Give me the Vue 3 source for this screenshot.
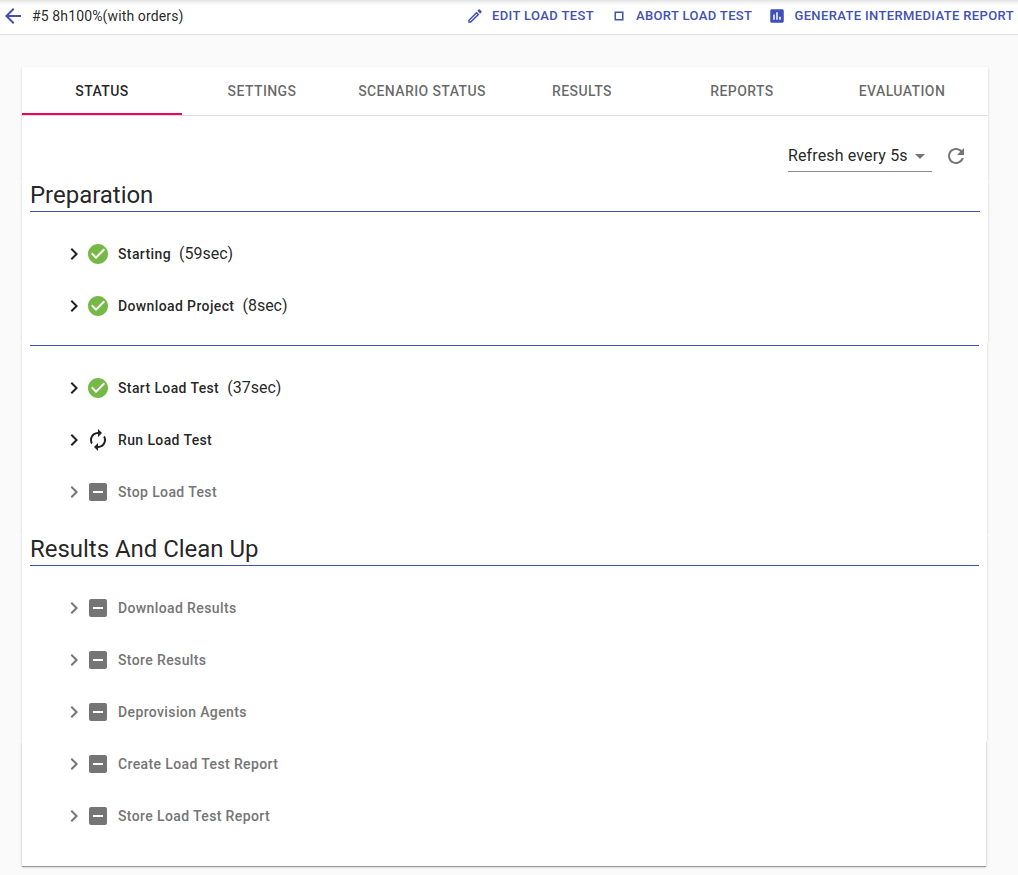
<script setup>
const icons = {
  back: 'M20 11H7.83l5.59-5.59L12 4l-8 8 8 8 1.41-1.41L7.83 13H20v-2z',
  edit: 'M14.06 9.02l.92.92L5.92 19H5v-.92l9.06-9.06M17.66 3c-.25 0-.51.1-.7.29l-1.83 1.83 3.75 3.75 1.83-1.83c.39-.39.39-1.02 0-1.41l-2.34-2.34c-.2-.2-.45-.29-.71-.29zm-3.6 3.19L3 17.25V21h3.75L17.81 9.94l-3.75-3.75z',
  stop: 'M16 8v8H8V8h8m2-2H6v12h12V6z',
  chart: 'M19 3H5c-1.1 0-2 .9-2 2v14c0 1.1.9 2 2 2h14c1.1 0 2-.9 2-2V5c0-1.1-.9-2-2-2zM9 17H7v-7h2v7zm4 0h-2V7h2v10zm4 0h-2v-4h2v4z',
  refresh: 'M17.65 6.35C16.2 4.9 14.21 4 12 4c-4.42 0-7.99 3.58-7.99 8s3.57 8 7.99 8c3.73 0 6.84-2.55 7.73-6h-2.08c-.82 2.33-3.04 4-5.65 4-3.31 0-6-2.69-6-6s2.69-6 6-6c1.66 0 3.14.69 4.22 1.78L13 11h7V4l-2.35 2.35z',
  chevron: 'M10 6L8.59 7.41 13.17 12l-4.58 4.59L10 18l6-6z',
  arrow: 'M7 10l5 5 5-5z',
  done: 'M12 2C6.48 2 2 6.48 2 12s4.48 10 10 10 10-4.48 10-10S17.52 2 12 2zm-2 15l-5-5 1.41-1.41L10 14.17l7.59-7.59L19 8l-9 9z',
  running: 'M12 6v3l4-4-4-4v3c-4.42 0-8 3.58-8 8 0 1.57.46 3.03 1.24 4.26L6.7 14.8c-.45-.83-.7-1.79-.7-2.8 0-3.31 2.69-6 6-6zm6.76 1.74L17.3 9.2c.44.84.7 1.79.7 2.8 0 3.31-2.69 6-6 6v-3l-4 4 4 4v-3c4.42 0 8-3.58 8-8 0-1.57-.46-3.03-1.24-4.26z',
  pending: 'M19 3H5c-1.1 0-2 .9-2 2v14c0 1.1.9 2 2 2h14c1.1 0 2-.9 2-2V5c0-1.1-.9-2-2-2zm-2 10H7v-2h10v2z',
}
const actions = [
  { icon: 'edit', label: 'Edit load test' },
  { icon: 'stop', label: 'Abort load test' },
  { icon: 'chart', label: 'Generate intermediate report' },
]
const tabs = ['Status', 'Settings', 'Scenario Status', 'Results', 'Reports', 'Evaluation']
const pending = (names) => names.map((name) => ({ name, state: 'pending' }))
const sections = [
  {
    key: 'prep',
    title: 'Preparation',
    steps: [
      { name: 'Starting', state: 'done', time: '(59sec)' },
      { name: 'Download Project', state: 'done', time: '(8sec)' },
    ],
  },
  {
    key: 'run',
    steps: [
      { name: 'Start Load Test', state: 'done', time: '(37sec)' },
      { name: 'Run Load Test', state: 'running' },
      { name: 'Stop Load Test', state: 'pending' },
    ],
  },
  {
    key: 'cleanup',
    title: 'Results And Clean Up',
    steps: pending(['Download Results', 'Store Results', 'Deprovision Agents']),
  },
  {
    key: 'reporting',
    steps: pending(['Create Load Test Report', 'Store Load Test Report']),
  },
]
</script>

<template>
  <div class="page">
    <header class="bar">
      <svg class="back" viewBox="0 0 24 24"><path :d="icons.back" /></svg>
      <span class="title">#5 8h100%(with orders)</span>
      <nav class="actions">
        <button v-for="a in actions" :key="a.label" class="action">
          <svg viewBox="0 0 24 24"><path :d="icons[a.icon]" /></svg>{{ a.label }}
        </button>
      </nav>
    </header>

    <main class="card">
      <div class="slab top">
        <div class="tabs">
          <button v-for="(t, i) in tabs" :key="t" class="tab" :class="{ active: i === 0 }">{{ t }}</button>
        </div>
        <div class="tools">
          <div class="select">
            <span>Refresh every 5s</span>
            <svg viewBox="0 0 24 24"><path :d="icons.arrow" /></svg>
          </div>
          <svg class="refresh" viewBox="0 0 24 24"><path :d="icons.refresh" /></svg>
        </div>
      </div>
      <section v-for="s in sections" :key="s.key" class="slab section" :class="s.key">
        <h2 v-if="s.title">{{ s.title }}</h2>
        <div class="steps">
          <div v-for="st in s.steps" :key="st.name" class="step" :class="st.state">
            <svg class="chevron" viewBox="0 0 24 24"><path :d="icons.chevron" /></svg>
            <svg class="state" viewBox="0 0 24 24"><path :d="icons[st.state]" /></svg>
            <span class="name">{{ st.name }}</span>
            <span v-if="st.time" class="time">{{ st.time }}</span>
          </div>
        </div>
      </section>
    </main>
  </div>
</template>

<style>
body { background: #fafafa; }
</style>

<style scoped>
.page {
  height: 875px;
  overflow: hidden;
  background: #fafafa;
  color: rgba(0, 0, 0, 0.87);
  font-family: Roboto, sans-serif;
}
.page * { box-sizing: border-box; }
svg { display: block; flex: none; fill: currentColor; }
button { border: 0; background: none; padding: 0; font: inherit; color: inherit; text-transform: uppercase; }
.bar {
  display: flex;
  align-items: center;
  height: 35px;
  padding: 0 4px 3px 1px;
  border-bottom: 1px solid #e0e0e0;
  background: linear-gradient(#e2e2e2, #f6f6f6 3px, #fff 6px);
}
.back { width: 24px; height: 24px; color: #3f51b5; }
.title { margin-left: 7px; font-size: 14px; line-height: 20px; letter-spacing: 0.13px; }
.actions { display: flex; gap: 16px; margin-left: auto; color: #3f51b5; }
.action {
  display: flex;
  align-items: center;
  font-size: 13px;
  font-weight: 500;
  line-height: 22px;
  letter-spacing: 0.371px;
  white-space: nowrap;
}
.action svg { width: 18px; height: 18px; margin-right: 8px; }
.card { width: 966px; margin: 32px 0 0 22px; }
.slab {
  background: #fff;
  box-shadow: 0 1px 3px rgba(0, 0, 0, 0.12), 0 1px 1px rgba(0, 0, 0, 0.12);
  clip-path: inset(0 -4px);
}
.top { height: 114px; clip-path: inset(-4px -4px 0); }
.tabs { display: flex; height: 49px; border-bottom: 1px solid #e0e0e0; }
.tab {
  width: 160px;
  height: 48px;
  font-size: 14px;
  font-weight: 500;
  letter-spacing: 0.4px;
  color: rgba(0, 0, 0, 0.6);
}
.tab.active { color: rgba(0, 0, 0, 0.87); border-bottom: 2px solid #f50057; padding-top: 2px; }
.tools { display: flex; align-items: center; justify-content: flex-end; padding: 24px 20px 0 0; }
.select {
  display: flex;
  align-items: center;
  justify-content: space-between;
  width: 144px;
  height: 32px;
  border-bottom: 1px solid #8c8c8c;
  font-size: 16px;
  letter-spacing: 0.13px;
}
.select svg { width: 24px; height: 24px; color: #757575; }
.refresh { width: 24px; height: 24px; margin-left: 12px; color: #757575; }
.section { padding: 0 8px; }
.prep { height: 161px; }
.run { width: 965px; height: 193px; padding-top: 3px; }
.run .steps { border-top: 1px solid #3f51b5; padding-top: 16px; }
.cleanup { width: 965px; height: 206px; }
.reporting {
  width: 964px;
  height: 125px;
  box-shadow: 0 1px 0 #999, 0 1px 3px rgba(0, 0, 0, 0.2), 0 1px 1px rgba(0, 0, 0, 0.12);
  clip-path: inset(0 -4px -5px);
}
.reporting .steps { margin-top: -3px; }
h2 {
  height: 31px;
  margin: 0;
  border-bottom: 1px solid #3f51b5;
  font-size: 24px;
  font-weight: 400;
  line-height: 28px;
  letter-spacing: -0.03px;
}
.prep .steps, .cleanup .steps { padding-top: 16px; }
.step { display: flex; align-items: center; height: 52px; padding-left: 32px; }
.reporting { display: flow-root; }
.chevron, .state { width: 24px; height: 24px; }
.done .state { color: #76b947; }
.name { margin-left: 8px; font-size: 14px; font-weight: 500; letter-spacing: 0.38px; }
.time { margin: -2px 0 0 8px; font-size: 16px; }
.pending { color: #757575; }
</style>
